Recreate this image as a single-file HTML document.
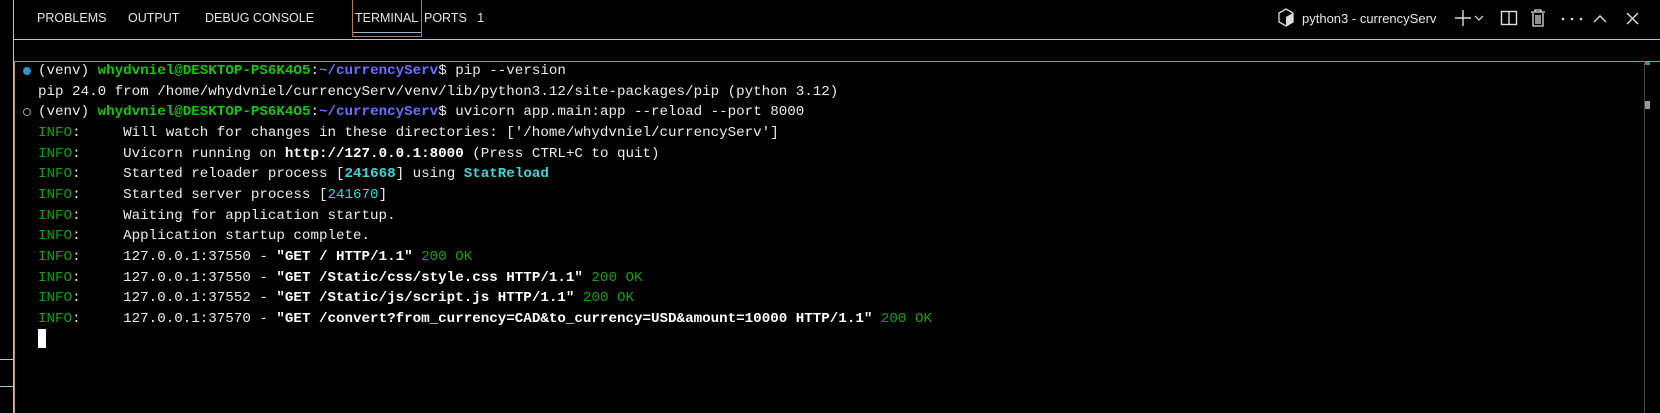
<!DOCTYPE html>
<html><head><meta charset="utf-8"><style>
*{margin:0;padding:0;box-sizing:border-box}
body{width:1660px;height:413px;background:#000;position:relative;overflow:hidden;font-family:"Liberation Sans",sans-serif;color:#fff}
.tabs{position:absolute;top:0;left:0;height:39px;width:1660px}
.tab{position:absolute;top:11px;font-size:12.5px;color:#e6e6e6;letter-spacing:0}
.tbox{position:absolute;left:352px;top:0;width:70px;height:37px;border:1px solid #b57a55;border-top:none}
.tline{position:absolute;left:353px;top:32px;width:68px;height:1px;background:#8fb6cf}
.hline{position:absolute;left:13px;top:39px;width:1647px;height:1px;background:#a9c8dc}
.oline{position:absolute;left:14px;top:61px;width:1646px;height:1px;background:#d0835a}
.vline{position:absolute;left:13px;top:0;width:1px;height:413px;background:#a9c8dc}
.vline2{position:absolute;left:14px;top:61px;width:1px;height:352px;background:#c08a6a}
pre{position:absolute;left:38px;top:61px;font-family:"Liberation Mono","DejaVu Sans Mono",monospace;font-size:14.2px;line-height:20.65px;color:#ececec}
.g{color:#16c60c;font-weight:bold}
.b{color:#6a70ff;font-weight:bold}
.i{color:#13a10e}
.c{color:#3ad7d7}
.cb{color:#3ad7d7;font-weight:bold}
.w{font-weight:bold;color:#fff}
.dot{position:absolute;left:23px;width:8px;height:8px;border-radius:50%}
</style></head><body>
<div class="vline"></div>
<div class="tabs">
<span class="tab" style="left:37px">PROBLEMS</span>
<span class="tab" style="left:128px">OUTPUT</span>
<span class="tab" style="left:205px">DEBUG CONSOLE</span>
<span class="tab" style="left:355px">TERMINAL</span>
<span class="tab" style="left:424px">PORTS&nbsp;&nbsp;&nbsp;1</span>
<div class="tbox"></div><div class="tline"></div>
<svg style="position:absolute;left:1277px;top:7px" width="18" height="22" viewBox="0 0 18 22"><path d="M9 2 L16 6 L16 15 L9 19 L2 15 L2 6 Z" fill="none" stroke="#ddd" stroke-width="1.3"/><path d="M9 10 L16 6 L16 15 L9 19Z" fill="#ddd"/></svg>
<span class="tab" style="left:1302px;font-size:13px">python3 - currencyServ</span>
<svg style="position:absolute;left:1440px;top:7px" width="220" height="24" viewBox="0 0 220 24">
<path d="M15 11H31M23 3V19" stroke="#ddd" stroke-width="1.4"/>
<path d="M35 9l4 4 4-4" stroke="#ddd" fill="none" stroke-width="1.2"/>
<rect x="61.5" y="4.5" width="15" height="13" fill="none" stroke="#ddd" stroke-width="1.4"/><line x1="69" y1="4.5" x2="69" y2="17.5" stroke="#ddd" stroke-width="1.4"/>
<path d="M91 5H105M95 5V3H101V5M93 6V19H103V6M96 8V17M98 8V17M100 8V17" stroke="#ddd" fill="none" stroke-width="1.3"/>
<circle cx="123" cy="12" r="1.3" fill="#ddd"/><circle cx="132" cy="12" r="1.3" fill="#ddd"/><circle cx="141" cy="12" r="1.3" fill="#ddd"/>
<path d="M154 15l6-6 6 6" stroke="#ddd" fill="none" stroke-width="1.4"/>
<path d="M187 6l11 11M198 6l-11 11" stroke="#ddd" stroke-width="1.4"/>
</svg>
</div>
<div class="hline"></div>
<div class="oline"></div>
<div class="vline2"></div>
<div style="position:absolute;left:1644px;top:61px;width:1px;height:352px;background:#444"></div>
<div style="position:absolute;left:1645px;top:62px;width:5px;height:3px;background:#3a8ea0"></div>
<div style="position:absolute;left:1645px;top:101px;width:5px;height:8px;background:#999"></div>
<div style="position:absolute;left:0;top:359px;width:13px;height:1px;background:#a9c8dc"></div>
<div style="position:absolute;left:0;top:386px;width:13px;height:1px;background:#a9c8dc"></div>
<div class="dot" style="top:67px;background:#3391c4"></div>
<div class="dot" style="top:108px;border:1.5px solid #999"></div>
<pre>(venv) <span class="g">whydvniel@DESKTOP-PS6K4O5</span>:<span class="b">~/currencyServ</span>$ pip --version
pip 24.0 from /home/whydvniel/currencyServ/venv/lib/python3.12/site-packages/pip (python 3.12)
(venv) <span class="g">whydvniel@DESKTOP-PS6K4O5</span>:<span class="b">~/currencyServ</span>$ uvicorn app.main:app --reload --port 8000
<span class="i">INFO</span>:     Will watch for changes in these directories: ['/home/whydvniel/currencyServ']
<span class="i">INFO</span>:     Uvicorn running on <span class="w">http://127.0.0.1:8000</span> (Press CTRL+C to quit)
<span class="i">INFO</span>:     Started reloader process [<span class="cb">241668</span>] using <span class="cb">StatReload</span>
<span class="i">INFO</span>:     Started server process [<span class="c">241670</span>]
<span class="i">INFO</span>:     Waiting for application startup.
<span class="i">INFO</span>:     Application startup complete.
<span class="i">INFO</span>:     127.0.0.1:37550 - <span class="w">"GET / HTTP/1.1"</span> <span class="i">200 OK</span>
<span class="i">INFO</span>:     127.0.0.1:37550 - <span class="w">"GET /Static/css/style.css HTTP/1.1"</span> <span class="i">200 OK</span>
<span class="i">INFO</span>:     127.0.0.1:37552 - <span class="w">"GET /Static/js/script.js HTTP/1.1"</span> <span class="i">200 OK</span>
<span class="i">INFO</span>:     127.0.0.1:37570 - <span class="w">"GET /convert?from_currency=CAD&amp;to_currency=USD&amp;amount=10000 HTTP/1.1"</span> <span class="i">200 OK</span>
</pre>
<div style="position:absolute;left:38px;top:329px;width:8px;height:19px;background:#fff"></div>
</body></html>
